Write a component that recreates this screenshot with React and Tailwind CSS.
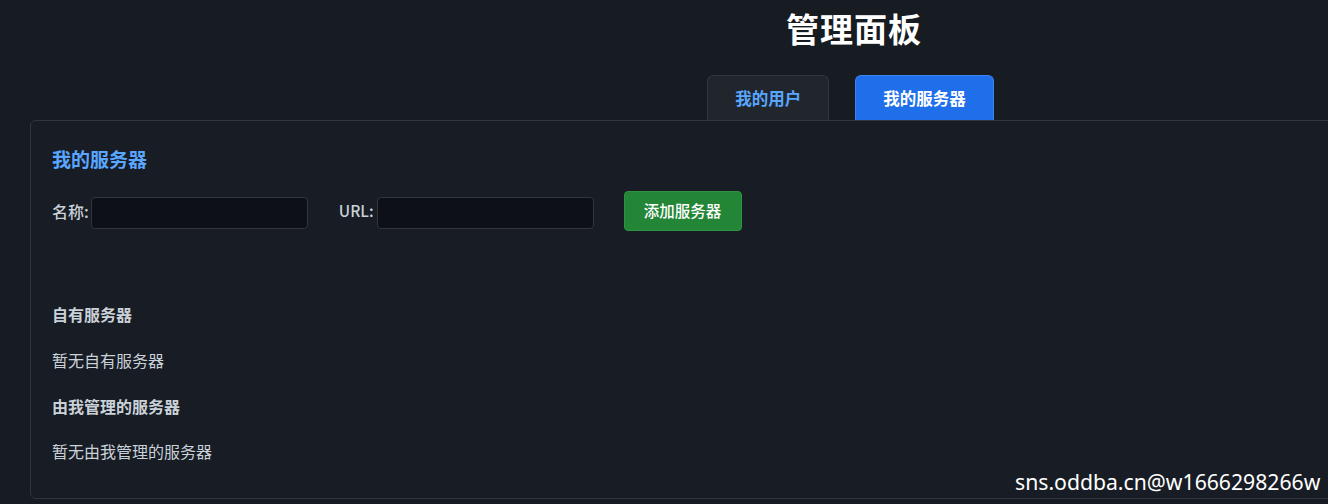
import React from "react";

export default function App() {
  return (
    <div
      className="relative w-[1328px] h-[504px] overflow-hidden bg-[#171b22] text-[#c9d1d9]"
      style={{ fontFamily: '"Noto Sans CJK SC", "Noto Sans", sans-serif' }}
    >
      <div className="ml-[30px] w-[1644px] flex flex-col items-center">
        {/* Title */}
        <h1 className="pt-[4px] text-[33px] leading-[48px] font-bold text-white tracking-[1px] ml-[4px]">
          管理面板
        </h1>

        {/* Tabs */}
        <div className="mt-[23px] flex gap-[26px] mr-[3px]">
          <button className="h-[45px] px-[27px] rounded-t-[6px] border border-b-0 border-[#30363d] bg-[#21262d] text-[#58a6ff] text-[16.5px] font-semibold">
            我的用户
          </button>
          <button className="h-[45px] px-[27px] rounded-t-[6px] border border-b-0 border-[#3b82f6] bg-[#1f6feb] text-white text-[16.5px] font-semibold">
            我的服务器
          </button>
        </div>

        {/* Panel */}
        <div className="w-full rounded-[6px] border border-[#30363d] bg-[#181c24] px-[21px] pt-[20px] pb-[35px]">
          <h3 className="mt-[4px] text-[19px] leading-[28px] font-bold text-[#58a6ff]">
            我的服务器
          </h3>

          <div className="mt-[18px] h-[40px] flex items-center">
            <label className="text-[16px] font-medium">名称:</label>
            <input className="ml-[2px] w-[217px] h-[32px] mt-[4px] rounded-[4px] border border-[#30363d] bg-[#0d1117] outline-none" />
            <label className="ml-[31px] text-[15.5px] font-medium">URL:</label>
            <input className="ml-[3px] w-[217px] h-[32px] mt-[4px] rounded-[4px] border border-[#30363d] bg-[#0d1117] outline-none" />
            <button className="ml-[30px] h-[40px] w-[118px] rounded-[4px] border border-[#2f9142] bg-[#238636] text-white text-[15.5px] font-medium">
              添加服务器
            </button>
          </div>

          <h4 className="mt-[71px] text-[16px] leading-[24px] font-bold">自有服务器</h4>
          <p className="mt-[22px] text-[16px] leading-[24px]">暂无自有服务器</p>
          <h4 className="mt-[22px] text-[16px] leading-[24px] font-bold">由我管理的服务器</h4>
          <p className="mt-[21px] text-[16px] leading-[24px]">暂无由我管理的服务器</p>
        </div>
      </div>

      {/* Watermark */}
      <div
        className="absolute left-[1015px] top-[468px] text-[21.2px] leading-[28px] text-white"
        style={{ fontFamily: '"Noto Sans", sans-serif' }}
      >
        sns.oddba.cn@w1666298266w
      </div>
    </div>
  );
}
